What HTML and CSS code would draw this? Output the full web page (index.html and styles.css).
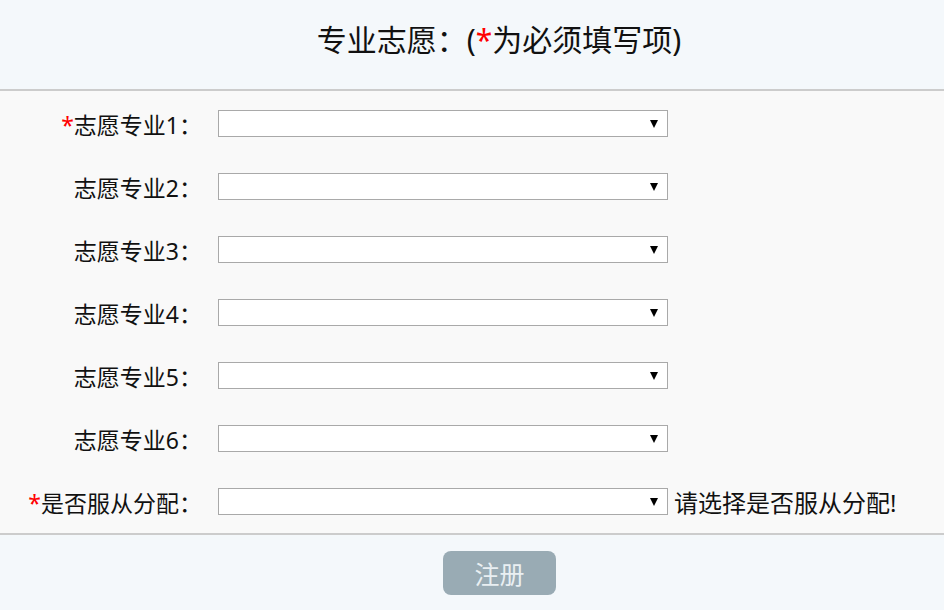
FILE: index.html
```html
<!DOCTYPE html>
<html lang="zh-CN">
<head>
  <meta charset="UTF-8">
  <title>专业志愿</title>
  <link rel="stylesheet" href="styles.css">
</head>
<body>

<div class="page">
  <div class="page-head">
    <h2>专业志愿：(<span class="req">*</span>为必须填写项)</h2>
  </div>

  <form class="wish-form" method="POST" action="register.php">
    <div class="form-row">
      <label><span class="req">*</span>志愿专业1：</label>
      <span class="select-box"><select name="major1"><option></option></select></span>
    </div>
    <div class="form-row">
      <label>志愿专业2：</label>
      <span class="select-box"><select name="major2"><option></option></select></span>
    </div>
    <div class="form-row">
      <label>志愿专业3：</label>
      <span class="select-box"><select name="major3"><option></option></select></span>
    </div>
    <div class="form-row">
      <label>志愿专业4：</label>
      <span class="select-box"><select name="major4"><option></option></select></span>
    </div>
    <div class="form-row">
      <label>志愿专业5：</label>
      <span class="select-box"><select name="major5"><option></option></select></span>
    </div>
    <div class="form-row">
      <label>志愿专业6：</label>
      <span class="select-box"><select name="major6"><option></option></select></span>
    </div>
    <div class="form-row">
      <label><span class="req">*</span>是否服从分配：</label>
      <span class="select-box"><select name="adjust"><option></option></select></span>
      <span class="hint">请选择是否服从分配!</span>
    </div>
  </form>

  <div class="page-foot">
    <button type="submit" disabled>注册</button>
  </div>
</div>

</body>
</html>
```

FILE: styles.css
```css
body {
  margin: 0;
  font-family: "Noto Sans", "Noto Sans CJK SC", sans-serif;
  color: #111;
  background-color: #f4f8fb;
}
.page {
  width: 944px;
}
.page-head {
  height: 89px;
  border-bottom: 2px solid #cccccc;
  background-color: #f4f8fb;
}
.page-head h2 {
  margin: 0;
  padding-top: 20px;
  padding-left: 54px;
  font-size: 30px;
  font-weight: normal;
  line-height: 40px;
  text-align: center;
}
.req {
  color: #ff0000;
}
.wish-form {
  margin: 0;
  padding-top: 1px;
  background-color: #f9f9f9;
  border-bottom: 2px solid #cccccc;
}
.form-row {
  display: flex;
  align-items: center;
  height: 63px;
}
.form-row label {
  width: 202px;
  text-align: right;
  font-size: 23px;
  margin-right: 16px;
}
.select-box {
  position: relative;
  display: block;
}
.select-box select {
  display: block;
  width: 450px;
  height: 27px;
  margin: 0;
  border: 1px solid #a9a9a9;
  border-radius: 0;
  background-color: #fff;
  -webkit-appearance: none;
  appearance: none;
}
.select-box::after {
  content: "";
  position: absolute;
  right: 10px;
  top: 10px;
  border-left: 4.5px solid transparent;
  border-right: 4.5px solid transparent;
  border-top: 8px solid #000;
}
.hint {
  margin-left: 6px;
  font-size: 24px;
}
.page-foot {
  height: 74px;
  padding-top: 16px;
  padding-left: 55px;
  box-sizing: border-box;
  text-align: center;
  background-color: #f4f8fb;
}
.page-foot button {
  width: 113px;
  height: 44px;
  border: none;
  border-radius: 8px;
  background-color: #99abb4;
  color: #e9eff2;
  font-family: inherit;
  font-size: 25px;
}
```
